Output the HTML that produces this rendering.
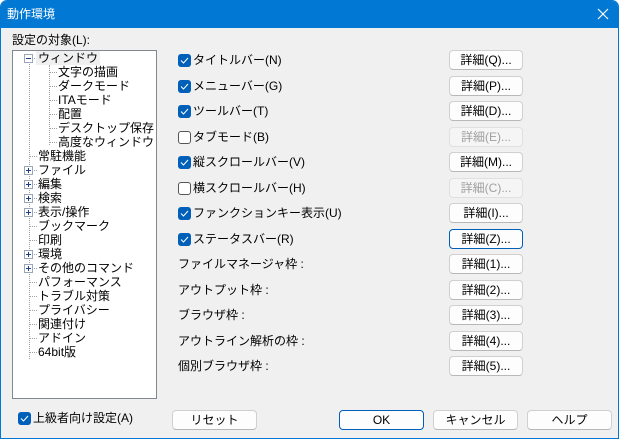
<!DOCTYPE html>
<html><head><meta charset="utf-8"><style>
*{margin:0;padding:0;box-sizing:border-box}
body{width:619px;height:439px;overflow:hidden;background:#fff;font-family:"Liberation Sans","Noto Sans CJK JP",sans-serif;font-size:12px;color:#000}
.win{position:absolute;left:0;top:0;width:619px;height:439px;background:#f0f0f0;border:1px solid #0078d4;border-radius:7px 7px 0 0;overflow:hidden}
.title{position:absolute;left:0;top:0;width:619px;height:27px;background:#0078d4;color:#fff;font-size:12px;line-height:27px;padding-left:6px}
.x{position:absolute;right:10px;top:6px}
.a{position:absolute;white-space:nowrap;line-height:14px}
.tree{position:absolute;left:11px;top:49px;width:145px;height:349px;background:#fff;border:1px solid #828790}
.cb{position:absolute;width:13px;height:13px;border-radius:3px;background:#005fb8}
.cb svg{position:absolute;left:2px;top:2px}
.cb.off{background:#fff;border:1px solid #555}
.btn{position:absolute;height:20px;background:#fdfdfd;border:1px solid #d0d0d0;border-bottom-color:#b8b8b8;border-radius:4px;text-align:center;line-height:18px;font-size:12px}
.btn.dis{background:#f5f5f5;color:#a0a0a0;border-color:#e0e0e0}
.btn.def{border:1px solid #005fb8}
.pb{position:absolute;width:9px;height:9px;border:1px solid #9aa5b5;background:#fff}
.pb:before{content:"";position:absolute;left:1px;top:3px;width:5px;height:1px;background:#1a3d8f}
.pb.p:after{content:"";position:absolute;left:3px;top:1px;width:1px;height:5px;background:#1a3d8f}
.vl{position:absolute;border-left:1px dotted #a0a0a0;width:0}
.hl{position:absolute;border-top:1px dotted #a0a0a0;height:0}
</style></head><body><div class="win">
<div class="title">動作環境<svg class="x" width="14" height="14" viewBox="0 0 14 14"><path d="M2 2L12 12M12 2L2 12" stroke="#fff" stroke-width="1.2"/></svg></div>
<div class="a" style="left:11px;top:32px">設定の対象(L):</div>
<div class="tree">
<div class="vl" style="left:16px;top:13px;height:295px"></div>
<div class="vl" style="left:36px;top:14px;height:80px"></div>
</div>
<div id="t"></div>
<script>
var items=[["ウィンドウ",0,"m"],["文字の描画",1],["ダークモード",1],["ITAモード",1],["配置",1],["デスクトップ保存",1],["高度なウィンドウ",1],["常駐機能",0],["ファイル",0,"p"],["編集",0,"p"],["検索",0,"p"],["表示/操作",0,"p"],["ブックマーク",0],["印刷",0],["環境",0,"p"],["その他のコマンド",0,"p"],["パフォーマンス",0],["トラブル対策",0],["プライバシー",0],["関連付け",0],["アドイン",0],["64bit版",0]];
var h="";
items.forEach(function(it,i){var y=57+i*14;
if(it[1]){h+='<div class="hl" style="left:48px;top:'+y+'px;width:8px"></div><div class="a" style="left:57px;top:'+(y-7)+'px">'+it[0]+'</div>';}
else{h+='<div class="hl" style="left:28px;top:'+y+'px;width:8px"></div>';
if(it[2])h+='<div class="pb '+(it[2]=="p"?"p":"")+'" style="left:23px;top:'+(y-4)+'px"></div>';
h+='<div class="a" style="left:37px;top:'+(y-7)+'px;'+(i==0?'background:#f0f0f0;padding:0 2px;left:35px':'')+'">'+it[0]+'</div>';}
});
var chk='<svg width="9" height="9" viewBox="0 0 9 9"><path d="M1 4.5L3.5 7L8 2" stroke="#fff" stroke-width="1" fill="none"/></svg>';
var rows=[["タイトルバー(N)",1,"詳細(Q)..."],["メニューバー(G)",1,"詳細(P)..."],["ツールバー(T)",1,"詳細(D)..."],["タブモード(B)",0,"詳細(E)...","dis"],["縦スクロールバー(V)",1,"詳細(M)..."],["横スクロールバー(H)",0,"詳細(C)...","dis"],["ファンクションキー表示(U)",1,"詳細(I)..."],["ステータスバー(R)",1,"詳細(Z)...","def"],["ファイルマネージャ枠 :",-1,"詳細(1)..."],["アウトプット枠 :",-1,"詳細(2)..."],["ブラウザ枠 :",-1,"詳細(3)..."],["アウトライン解析の枠 :",-1,"詳細(4)..."],["個別ブラウザ枠 :",-1,"詳細(5)..."]];
rows.forEach(function(r,i){var y=Math.round(59+i*25.5);
if(r[1]>=0){h+='<div class="cb '+(r[1]?'':'off')+'" style="left:177px;top:'+(y-6)+'px">'+(r[1]?chk:'')+'</div><div class="a" style="left:192px;top:'+(y-7)+'px">'+r[0]+'</div>';}
else h+='<div class="a" style="left:177px;top:'+(y-7)+'px">'+r[0]+'</div>';
h+='<div class="btn '+(r[3]||'')+'" style="left:448px;top:'+(y-10)+'px;width:74px">'+r[2]+'</div>';
});
h+='<div class="cb" style="left:17px;top:411px">'+chk+'</div><div class="a" style="left:32px;top:410px">上級者向け設定(A)</div>';
h+='<div class="btn" style="left:171px;top:409px;width:85px">リセット</div>';
h+='<div class="btn def" style="left:338px;top:409px;width:85px">OK</div>';
h+='<div class="btn" style="left:432px;top:409px;width:85px">キャンセル</div>';
h+='<div class="btn" style="left:526px;top:409px;width:85px">ヘルプ</div>';
document.getElementById("t").innerHTML=h;
</script>
</div></body></html>
